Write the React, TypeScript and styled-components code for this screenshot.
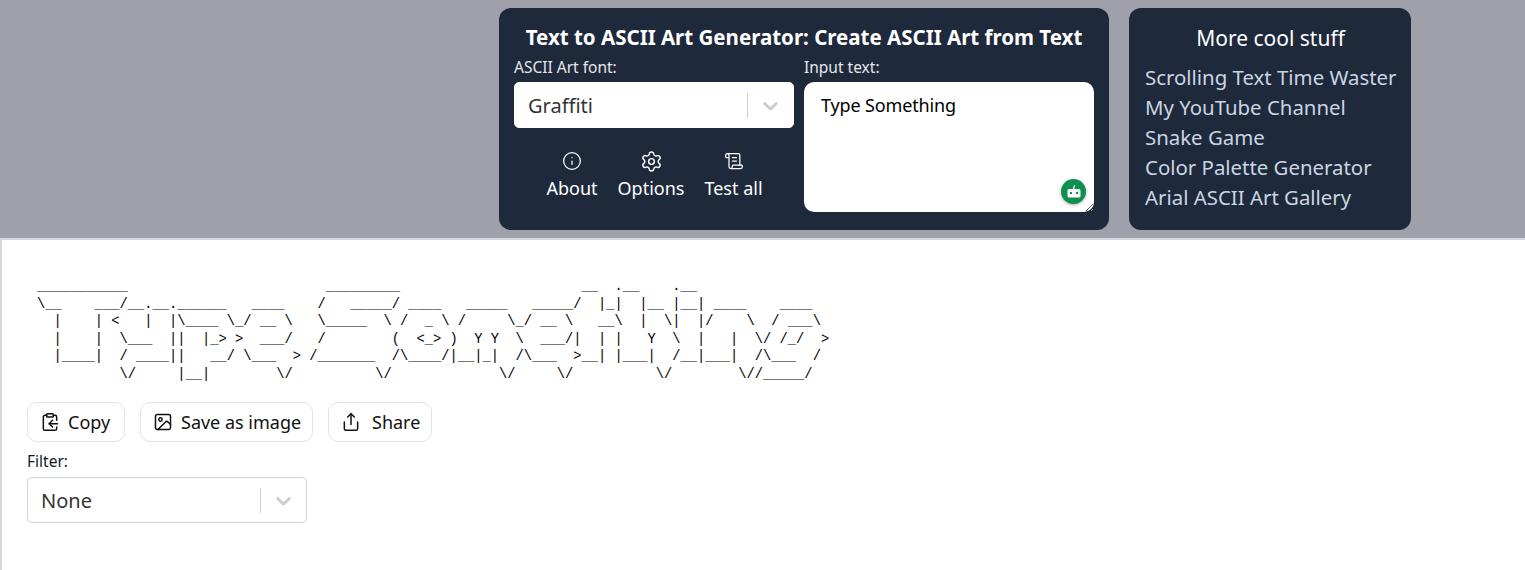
import React, { ReactElement } from 'react'
import styled, { createGlobalStyle } from 'styled-components'
import { ClipboardCopy, Image, Info, ScrollText, Settings, Share } from 'lucide-react'

const uiFont = `"Noto Sans", "Open Sans", sans-serif`

const GlobalStyle = createGlobalStyle`
  html, body {
    margin: 0;
    padding: 0;
    background: #ffffff;
    font-family: ${uiFont};
    overflow: hidden;
  }
  * {
    box-sizing: border-box;
  }
`

const Page = styled.div`
  width: 1525px;
  height: 570px;
  display: flex;
  flex-direction: column;
`

const Header = styled.header`
  height: 238px;
  background: #9fa0aa;
  padding: 8px 0 0 499px;
  display: flex;
  gap: 20px;
  align-items: flex-start;
`

const Panel = styled.section`
  background: #1e293b;
  border-radius: 12px;
  height: 222px;
  color: #ffffff;
`

const MainPanel = styled(Panel)`
  width: 610px;
  padding: 16px 15px 0;
`

const Title = styled.h1`
  margin: 0;
  font-size: 20.5px;
  line-height: 26px;
  font-weight: 700;
  text-align: center;
  white-space: nowrap;
`

const Columns = styled.div`
  display: flex;
  gap: 10px;
  margin-top: 6px;
`

const LeftColumn = styled.div`
  width: 280px;
`

const RightColumn = styled.div`
  width: 290px;
  position: relative;
`

const FieldLabel = styled.label<{ $dark?: boolean }>`
  display: block;
  font-size: 15.5px;
  line-height: 22px;
  margin-bottom: ${(p) => (p.$dark ? 5 : 4)}px;
  color: ${(p) => (p.$dark ? '#111827' : '#e5e7eb')};
`

const SelectBox = styled.div<{ $outlined?: boolean }>`
  width: 280px;
  height: 46px;
  background: #ffffff;
  border: 1px solid ${(p) => (p.$outlined ? '#d1d5db' : '#ffffff')};
  border-radius: 5px;
  display: flex;
  align-items: center;
  padding-left: 13px;
  color: #333333;
  font-size: 20px;
`

const SelectValue = styled.span`
  flex: 1;
`

const SelectDivider = styled.span`
  width: 1px;
  height: 25px;
  background: #cccccc;
`

const SelectArrow = styled.span`
  width: 45px;
  display: flex;
  justify-content: center;
  color: #cccccc;
`

const ActionRow = styled.div`
  display: flex;
  justify-content: center;
  gap: 20px;
  margin-top: 23px;
  padding-left: 1px;
`

const ActionLink = styled.a`
  display: flex;
  flex-direction: column;
  align-items: center;
  gap: 5px;
  color: #ffffff;
  font-size: 18px;
  line-height: 24px;
`

const ActionIcon = styled.span`
  height: 20px;
  display: flex;
  align-items: center;
  justify-content: center;
`

const TextInput = styled.textarea`
  display: block;
  width: 290px;
  height: 130px;
  border: none;
  outline: none;
  border-radius: 10px;
  background: #ffffff;
  padding: 10px 17px;
  color: #000000;
  font-family: ${uiFont};
  font-size: 18px;
  line-height: 26px;
  letter-spacing: -0.15px;
  resize: both;
`

const BotBadge = styled.span`
  position: absolute;
  right: 8px;
  bottom: 8px;
  width: 25px;
  height: 25px;
  border-radius: 50%;
  background: #0c8f4f;
  box-shadow: 0 1px 3px rgba(0, 0, 0, 0.35);
  display: flex;
  align-items: center;
  justify-content: center;
`

const SidePanel = styled(Panel)`
  width: 282px;
  padding: 16px 15px 0 16px;
`

const SideTitle = styled.h2`
  margin: 0 0 10px;
  font-size: 21px;
  line-height: 28px;
  font-weight: 400;
  text-align: center;
`

const SideLink = styled.a`
  display: block;
  color: #cbd5e1;
  font-size: 20.4px;
  line-height: 30px;
  white-space: nowrap;
`

const Content = styled.main`
  flex: 1;
  background: #ffffff;
  border-top: 2px solid #d6d6de;
  border-left: 2px solid #d6d6de;
  padding: 38px 0 0 25px;
`

const AsciiArt = styled.pre`
  margin: 0 0 0 10px;
  font-family: "Liberation Mono", monospace;
  font-size: 13.75px;
  line-height: 17.5px;
  color: #000000;
`

const ButtonRow = styled.div`
  display: flex;
  gap: 15px;
  margin-top: 19px;
`

const ToolButton = styled.button<{ $width: number; $gap?: number }>`
  width: ${(p) => p.$width}px;
  height: 40px;
  display: flex;
  align-items: center;
  gap: ${(p) => p.$gap ?? 8}px;
  padding: 0 0 0 12px;
  border: 1px solid #e2e3e8;
  border-radius: 10px;
  background: #ffffff;
  color: #111111;
  font-family: ${uiFont};
  font-size: 18px;
  white-space: nowrap;
`

const FilterBlock = styled.div`
  margin-top: 8px;
`

const art = [
  String.raw`___________                        _________                      __  .__    .__                 `,
  String.raw`\__    ___/__.__.______   ____    /   _____/ ____   _____   _____/  |_|  |__ |__| ____    ____  `,
  String.raw`  |    | <   |  |\____ \_/ __ \   \_____  \ /  _ \ /     \_/ __ \   __\  |  \|  |/    \  / ___\ `,
  String.raw`  |    |  \___  ||  |_> >  ___/   /        (  <_> )  Y Y  \  ___/|  | |   Y  \  |   |  \/ /_/  >`,
  String.raw`  |____|  / ____||   __/ \___  > /_______  /\____/|__|_|  /\___  >__| |___|  /__|___|  /\___  / `,
  String.raw`          \/     |__|        \/          \/             \/     \/          \/        \//_____/  `,
].join('\n')

function Chevron(): ReactElement {
  return (
    <svg width="25" height="25" viewBox="0 0 20 20" fill="currentColor">
      <path d="M4.516 7.548c0.436-0.446 1.043-0.481 1.576 0l3.908 3.747 3.908-3.747c0.533-0.481 1.141-0.446 1.574 0 0.436 0.445 0.408 1.197 0 1.615-0.406 0.418-4.695 4.502-4.695 4.502-0.217 0.223-0.502 0.335-0.787 0.335s-0.57-0.112-0.789-0.335c0 0-4.287-4.084-4.695-4.502s-0.436-1.17 0-1.615z" />
    </svg>
  )
}

function BotIcon(): ReactElement {
  return (
    <svg width="16" height="14" viewBox="0 0 16 14" fill="none">
      <path d="M7.5 4 L8.5 0.5" stroke="#ffffff" strokeWidth="1.2" strokeLinecap="round" />
      <rect x="1.5" y="4" width="13" height="8.5" rx="1.5" fill="#ffffff" />
      <rect x="4" y="7" width="2" height="2" fill="#0c8f4f" />
      <rect x="10" y="7" width="2" height="2" fill="#0c8f4f" />
    </svg>
  )
}

export default function App(): ReactElement {
  return (
    <Page>
      <GlobalStyle />
      <Header>
        <MainPanel>
          <Title>Text to ASCII Art Generator: Create ASCII Art from Text</Title>
          <Columns>
            <LeftColumn>
              <FieldLabel>ASCII Art font:</FieldLabel>
              <SelectBox>
                <SelectValue>Graffiti</SelectValue>
                <SelectDivider />
                <SelectArrow>
                  <Chevron />
                </SelectArrow>
              </SelectBox>
              <ActionRow>
                <ActionLink>
                  <ActionIcon>
                    <Info size={20} strokeWidth={1.5} />
                  </ActionIcon>
                  About
                </ActionLink>
                <ActionLink>
                  <ActionIcon>
                    <Settings size={23} strokeWidth={1.5} />
                  </ActionIcon>
                  Options
                </ActionLink>
                <ActionLink>
                  <ActionIcon>
                    <ScrollText size={20} strokeWidth={1.5} />
                  </ActionIcon>
                  Test all
                </ActionLink>
              </ActionRow>
            </LeftColumn>
            <RightColumn>
              <FieldLabel>Input text:</FieldLabel>
              <TextInput readOnly value="Type Something" />
              <BotBadge>
                <BotIcon />
              </BotBadge>
            </RightColumn>
          </Columns>
        </MainPanel>
        <SidePanel>
          <SideTitle>More cool stuff</SideTitle>
          <SideLink>Scrolling Text Time Waster</SideLink>
          <SideLink>My YouTube Channel</SideLink>
          <SideLink>Snake Game</SideLink>
          <SideLink>Color Palette Generator</SideLink>
          <SideLink>Arial ASCII Art Gallery</SideLink>
        </SidePanel>
      </Header>
      <Content>
        <AsciiArt>{art}</AsciiArt>
        <ButtonRow>
          <ToolButton $width={98}>
            <ClipboardCopy size={20} strokeWidth={1.8} />
            Copy
          </ToolButton>
          <ToolButton $width={173}>
            <Image size={20} strokeWidth={1.8} />
            Save as image
          </ToolButton>
          <ToolButton $width={104} $gap={11}>
            <Share size={20} strokeWidth={1.8} />
            Share
          </ToolButton>
        </ButtonRow>
        <FilterBlock>
          <FieldLabel $dark>Filter:</FieldLabel>
          <SelectBox $outlined>
            <SelectValue>None</SelectValue>
            <SelectDivider />
            <SelectArrow>
              <Chevron />
            </SelectArrow>
          </SelectBox>
        </FilterBlock>
      </Content>
    </Page>
  )
}
